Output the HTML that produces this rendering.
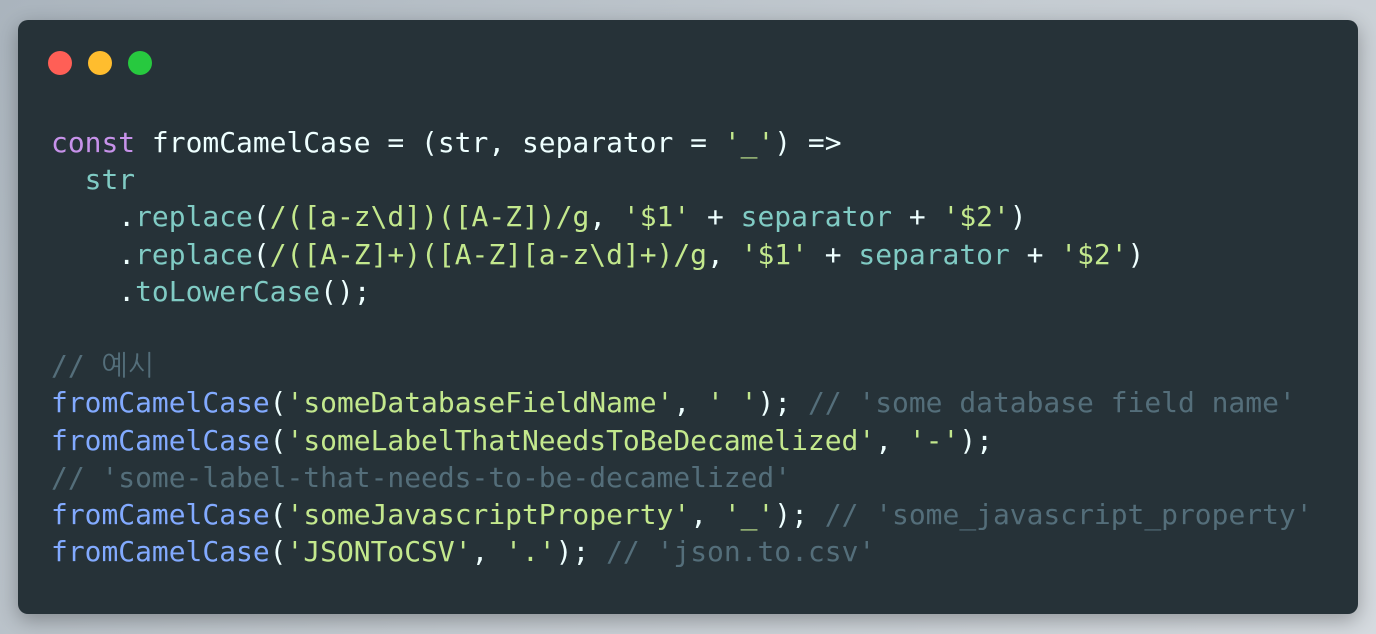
<!DOCTYPE html>
<html><head><meta charset="utf-8"><style>
html,body{margin:0;padding:0;}
body{width:1376px;height:634px;background:linear-gradient(135deg,#aab4bd,#c4cbd1 50%,#d5dadf);position:relative;overflow:hidden;}
.card{position:absolute;left:18px;top:20px;width:1340px;height:594px;background:#263238;border-radius:10px;box-shadow:0 6px 20px rgba(0,0,0,.3);}
.dot{position:absolute;top:31px;width:24px;height:24px;border-radius:50%;}
pre{position:absolute;left:33px;top:104px;margin:0;font-family:"DejaVu Sans Mono","Liberation Mono","NanumGothic",monospace;font-size:27.95px;line-height:37.2px;color:#eeffff;}
.k{color:#c792ea}.t{color:#80cbc4}.s{color:#c3e88d}.f{color:#82aaff}.c{color:#546e7a}
</style></head><body><div class="card">
<div class="dot" style="left:30px;background:#ff5f56"></div>
<div class="dot" style="left:70px;background:#ffbd2e"></div>
<div class="dot" style="left:110px;background:#27c93f"></div>
<pre><span class="k">const</span> fromCamelCase = (str, separator = <span class="s">'_'</span>) =&gt;
  <span class="t">str</span>
    .<span class="t">replace</span>(<span class="s">/([a-z\d])([A-Z])/g</span>, <span class="s">'$1'</span> + <span class="t">separator</span> + <span class="s">'$2'</span>)
    .<span class="t">replace</span>(<span class="s">/([A-Z]+)([A-Z][a-z\d]+)/g</span>, <span class="s">'$1'</span> + <span class="t">separator</span> + <span class="s">'$2'</span>)
    .<span class="t">toLowerCase</span>();

<span class="c">// 예시</span>
<span class="f">fromCamelCase</span>(<span class="s">'someDatabaseFieldName'</span>, <span class="s">' '</span>); <span class="c">// 'some database field name'</span>
<span class="f">fromCamelCase</span>(<span class="s">'someLabelThatNeedsToBeDecamelized'</span>, <span class="s">'-'</span>);
<span class="c">// 'some-label-that-needs-to-be-decamelized'</span>
<span class="f">fromCamelCase</span>(<span class="s">'someJavascriptProperty'</span>, <span class="s">'_'</span>); <span class="c">// 'some_javascript_property'</span>
<span class="f">fromCamelCase</span>(<span class="s">'JSONToCSV'</span>, <span class="s">'.'</span>); <span class="c">// 'json.to.csv'</span></pre>
</div></body></html>
